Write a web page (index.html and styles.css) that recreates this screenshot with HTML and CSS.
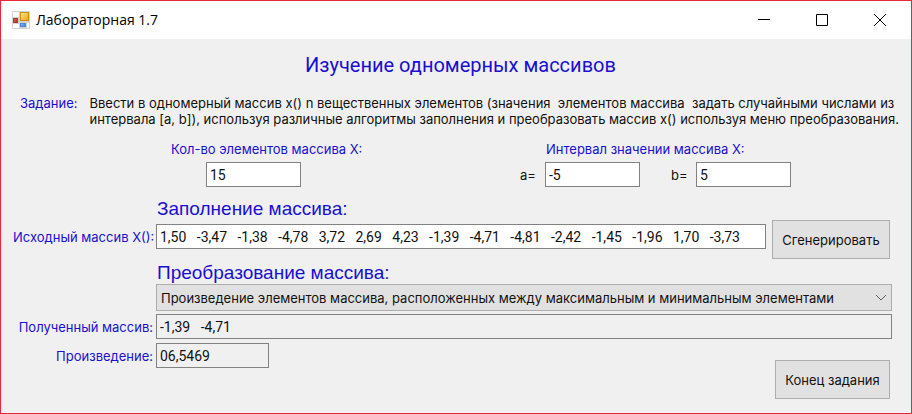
FILE: index.html
```html
<!DOCTYPE html>
<html lang="ru">
<head>
<meta charset="utf-8">
<title>Лабораторная 1.7</title>
<link rel="stylesheet" href="styles.css">
</head>
<body>
<div class="window">
  <header class="titlebar">
    <svg class="app-icon" width="18" height="18" viewBox="0 0 18 18" aria-hidden="true">
      <defs>
        <linearGradient id="gold" x2="1" y2="1"><stop stop-color="#ffe792"/><stop offset="1" stop-color="#e9a500"/></linearGradient>
        <linearGradient id="red" x2="1" y2="1"><stop stop-color="#df7770"/><stop offset="1" stop-color="#b01c12"/></linearGradient>
        <linearGradient id="blue" x2="1" y2="1"><stop stop-color="#8fbcf8"/><stop offset="1" stop-color="#3475dc"/></linearGradient>
      </defs>
      <rect width="18" height="18" rx="1" fill="#d3d3d3"/>
      <path d="M1 1h6v5H1zM1 13h6v4H1zM15 12h2v5h-2z" fill="#fff"/>
      <rect x="8.500" y="1.500" width="8" height="8" fill="url(#gold)" stroke="#c99010"/>
      <rect x="1.500" y="7.500" width="4" height="4" fill="url(#red)" stroke="#b2372d"/>
      <rect x="8.500" y="12.500" width="5" height="3" fill="url(#blue)" stroke="#5187d8"/>
    </svg>
    <span class="caption">Лабораторная 1.7</span>
    <button class="win-button" type="button" aria-label="Свернуть"><svg width="12" height="12" viewBox="0 0 12 12"><path d="M0 5.500h12"/></svg></button>
    <button class="win-button" type="button" aria-label="Развернуть"><svg width="12" height="12" viewBox="0 0 12 12"><path d="M.5.5h11v11H.5z"/></svg></button>
    <button class="win-button" type="button" aria-label="Закрыть"><svg width="12" height="12" viewBox="0 0 12 12"><path d="M0 0l12 12M12 0L0 12"/></svg></button>
  </header>

  <main class="form">
    <h1 class="title">Изучение одномерных массивов</h1>

    <div class="task">
      <span class="task-label">Задание:</span>
      <p class="task-text">Ввести в одномерный массив x() n вещественных элементов (значения&nbsp; элементов массива&nbsp; задать случайными числами из<br>интервала [a, b]), используя различные алгоритмы заполнения и преобразовать массив x() используя меню преобразования.</p>
    </div>

    <div class="params">
      <div class="param count">
        <label class="label" for="count">Кол-во элементов массива X:</label>
        <input class="box short" id="count" value="15">
      </div>
      <div class="param range" role="group" aria-labelledby="range-label">
        <span class="label" id="range-label">Интервал значении массива X:</span>
        <div class="bounds">
          <label class="bound" for="a">a=</label>
          <input class="box short" id="a" value="-5">
          <label class="bound second" for="b">b=</label>
          <input class="box short" id="b" value="5">
        </div>
      </div>
    </div>

    <section class="section">
      <h2 class="heading">Заполнение массива:</h2>
      <div class="source">
        <div class="row">
          <label class="label side" for="source">Исходный массив X():</label>
          <input class="box" id="source" value="1,50   -3,47   -1,38   -4,78   3,72   2,69   4,23   -1,39   -4,71   -4,81   -2,42   -1,45   -1,96   1,70   -3,73">
        </div>
        <button class="button generate" type="button">Сгенерировать</button>
      </div>
    </section>

    <section class="section transform">
      <h2 class="heading" id="transform-label">Преобразование массива:</h2>
      <div class="choice">
        <select class="select" aria-labelledby="transform-label">
          <option>Произведение элементов массива, расположенных между максимальным и минимальным элементами</option>
        </select>
        <svg class="chevron" width="12" height="8" viewBox="0 0 12 8" aria-hidden="true"><path d="M1 1l5 5 5-5"/></svg>
      </div>
      <div class="row">
        <label class="label side" for="result">Полученный массив:</label>
        <input class="box readonly" id="result" readonly value="-1,39   -4,71">
      </div>
    </section>

    <div class="bottom">
      <div class="row">
        <label class="label side" for="product">Произведение:</label>
        <input class="box readonly product" id="product" readonly value="06,5469">
      </div>
      <button class="button finish" type="button">Конец задания</button>
    </div>
  </main>
</div>
</body>
</html>
```

FILE: styles.css
```css
* { box-sizing: border-box; }

body {
  margin: 0;
  font: 13px/16px Inter, "Liberation Sans", sans-serif;
  color: #111;
}

input, select, button { font: inherit; color: inherit; border-radius: 0; margin: 0; }

.window {
  display: flex;
  flex-direction: column;
  min-height: 100vh;
  border: 1px solid #e8273c;
  background: #f0f0f0;
}

.titlebar {
  display: flex;
  align-items: center;
  height: 38px;
  padding: 0 2px 0 11px;
  background: #fff;
}

.caption {
  flex: 1;
  margin-left: 6px;
  font: 14px/20px "Open Sans", "Noto Sans", sans-serif;
  color: #000;
}

.win-button {
  display: grid;
  place-items: center;
  width: 58px;
  height: 38px;
  padding: 0;
  border: 0;
  background: none;
}

.win-button svg { fill: none; stroke: #000; }

.form {
  flex: 1;
  padding: 14px 19px 14px 12px;
}

.title {
  margin: 0 0 18px;
  padding-left: 16px;
  text-align: center;
  font: 20px/24px Roboto, sans-serif;
  color: #1a0fd0;
}

.label, .task-label { color: #1a0fd0; }

.task { display: flex; gap: 12px; padding-left: 7px; }
.task-text { margin: 0; white-space: nowrap; }

.params {
  display: flex;
  justify-content: space-between;
  margin-top: 14px;
  padding: 0 101px 0 158px;
}

.param { display: flex; flex-direction: column; gap: 5px; }
.count .short { margin-left: 35px; }
.range .label { padding-left: 26px; }

.bounds { display: flex; align-items: center; }
.bound { width: 25px; }
.bound.second { margin-left: 31px; }

.box {
  flex: 1;
  min-width: 0;
  width: 100%;
  height: 25px;
  padding: 0 3px;
  border: 1px solid #828282;
  background: #fff;
  font: 14px/16px Roboto, sans-serif;
}

.box.short { flex: none; width: 95px; }
.box.readonly { background: #f0f0f0; }
.box.product { flex: none; width: 113px; }

.heading {
  margin: 0 0 0 144px;
  font: 19px/22px "Liberation Sans", sans-serif;
  color: #1a0fd0;
}

.section { margin-top: 11px; }
.section.transform { margin-top: 3px; }

.source { display: flex; align-items: flex-start; gap: 6px; padding-right: 2px; }
.source .row { flex: 1; margin-top: 4px; }

.row { display: flex; align-items: center; }
.side { width: 143px; padding-right: 3px; text-align: right; white-space: nowrap; }

.button {
  min-width: 115px;
  height: 39px;
  padding: 0 6px;
  border: 1px solid #adadad;
  background: #e1e1e1;
}

.generate { min-width: 118px; }

.choice { display: grid; align-items: center; margin-left: 143px; }

.select {
  grid-area: 1 / 1;
  width: 100%;
  height: 27px;
  padding: 0 24px 0 4px;
  border: 1px solid #adadad;
  background: #e1e1e1;
  appearance: none;
}

.chevron {
  grid-area: 1 / 1;
  justify-self: end;
  margin-right: 5px;
  fill: none;
  stroke: #606060;
  pointer-events: none;
}

.transform .row { margin-top: 3px; }

.bottom {
  display: flex;
  align-items: flex-start;
  justify-content: space-between;
  margin-top: 4px;
  padding-right: 2px;
}

.finish { margin-top: 17px; }
```
